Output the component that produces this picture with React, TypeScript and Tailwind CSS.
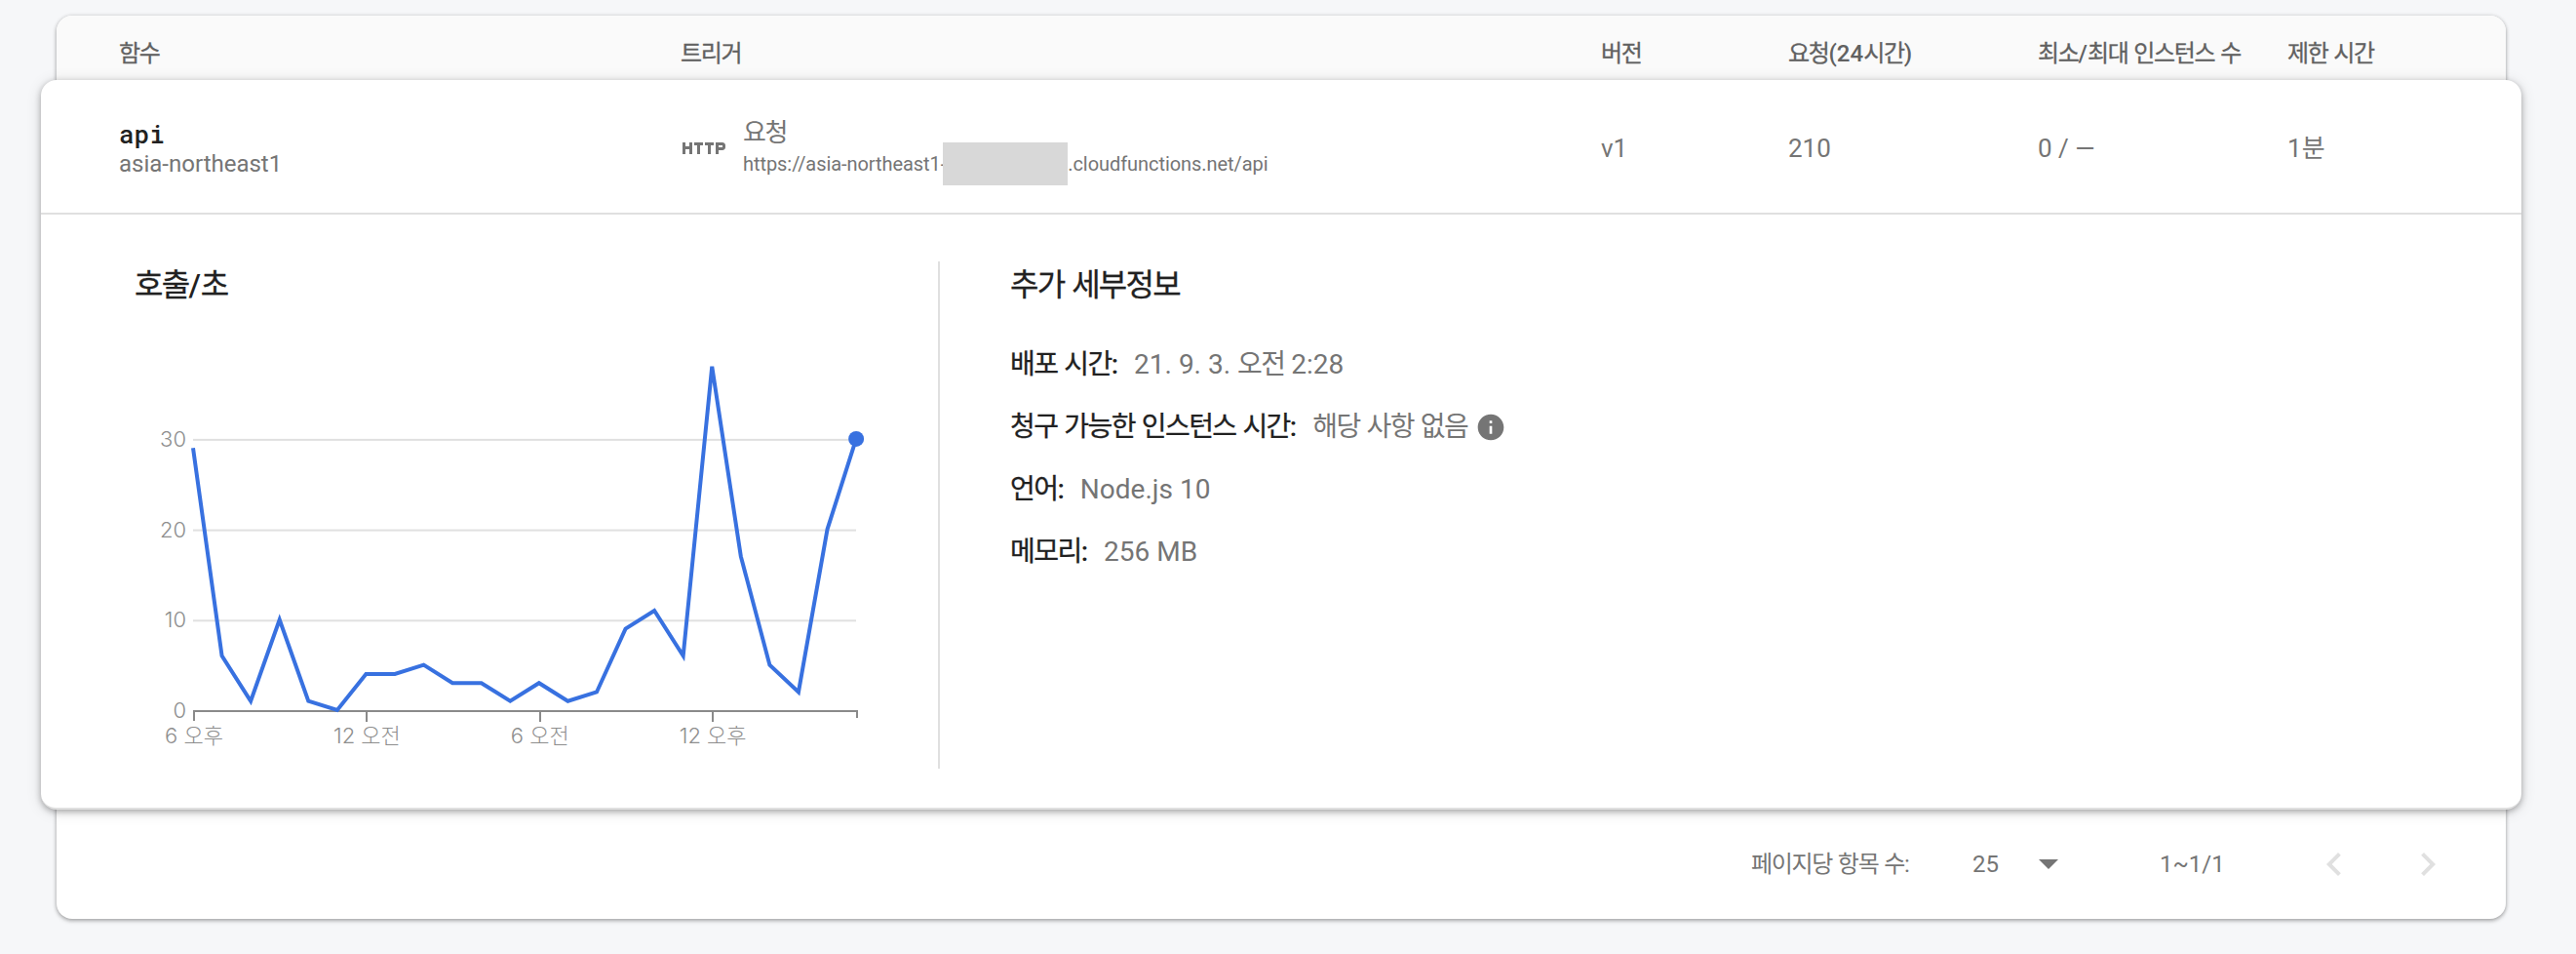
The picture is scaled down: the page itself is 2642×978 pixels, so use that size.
import React from "react";
import { MdHttp, MdInfo } from "react-icons/md";

const points = [29, 6, 1, 10, 1, 0, 4, 4, 5, 3, 3, 1, 3, 1, 2, 9, 11, 6, 38, 17, 5, 2, 20, 30];
const px = (i: number) => 198 + i * 29.57;
const py = (v: number) => 728 - v * 9.27;

const grid = "grid grid-cols-[576px_944px_192px_256px_256px_1fr]";
const kr = "font-[Roboto,'Noto_Sans_CJK_KR',sans-serif]";

// Sets Hangul runs slightly tighter than the Latin text around them.
function Ko({ children, strong }: { children: string; strong?: boolean }) {
  return (
    <span>
      {children.split(/([가-힣][가-힣 ]*)/).map((part, i) =>
        i % 2 ? (
          <span
            key={i}
            className={
              strong
                ? "font-normal tracking-[-0.055em] [word-spacing:0.05em] [-webkit-text-stroke:0.3px]"
                : "tracking-[-0.055em] [word-spacing:0.05em]"
            }
          >
            {part}
          </span>
        ) : (
          part
        ),
      )}
    </span>
  );
}

function Detail({ label, value, children }: { label: string; value: string; children?: React.ReactNode }) {
  return (
    <div className="flex h-16 items-center text-[28px] leading-10">
      <span className="font-medium text-[#212121]"><Ko strong>{label}</Ko></span>
      <span className="ml-4 text-[#757575]"><Ko>{value}</Ko></span>
      {children}
    </div>
  );
}

function Chart() {
  return (
    <svg width="800" height="430" viewBox="130 350 800 430" className="block font-[Inter,'Noto_Sans_CJK_KR',sans-serif] font-light">
      {[30, 20, 10].map((v) => (
        <rect key={v} x="198" y={729 - v * 9.27 - 1} width="680" height="2" fill="#e0e0e0" />
      ))}
      {[30, 20, 10, 0].map((v) => (
        <text key={v} x="191" y={736 - v * 9.27} textAnchor="end" fontSize="22" fill="#8e8e8e">{v}</text>
      ))}
      <path d="M199 739V729H879V736M376 729V740M554 729V740M731 729V740" fill="none" stroke="#8a8a8a" strokeWidth="2" />
      {["6 오후", "12 오전", "6 오전", "12 오후"].map((t, i) => (
        <text key={i} x={199 + i * 177.4} y="762" textAnchor="middle" fontSize="22" fill="#8e8e8e">{t}</text>
      ))}
      <polyline points={points.map((v, i) => `${px(i)},${py(v)}`).join(" ")} fill="none" stroke="#3871e0" strokeWidth="4" />
      <circle cx={px(23)} cy={py(30)} r="8" fill="#3871e0" />
    </svg>
  );
}

const columns = ["함수", "트리거", "버전", "요청(24시간)", "최소/최대 인스턴스 수", "제한 시간"];

export default function App() {
  return (
    <div className={`h-[978px] w-[2642px] bg-[#f6f7f9] pt-4 pr-14 pl-[42px] text-[#757575] ${kr}`}>
      <div className="mx-4 h-[926px] rounded-2xl bg-white shadow-[0_2px_4px_rgba(0,0,0,0.3),0_0_4px_rgba(0,0,0,0.12)]">
        <div className={`${grid} h-[66px] items-center rounded-t-2xl bg-[#fafafa] pt-3 pl-16 text-[24px] font-medium text-[#616161]`}>
          {columns.map((c) => <Ko key={c} strong>{c}</Ko>)}
        </div>
        <div className="-mx-4 h-[748px] rounded-2xl border-b-2 border-[#e0e0e0] bg-white shadow-[0_2px_6px_rgba(0,0,0,0.3),0_2px_16px_rgba(0,0,0,0.12)]">
          <div className={`${grid} h-[138px] items-center border-b-2 border-[#e0e0e0] pt-1 pl-20 text-[26px]`}>
            <div className="pt-0.5 leading-[32px]">
              <div className="font-['Roboto_Mono','DejaVu_Sans_Mono',monospace] text-[26px] leading-[30px] font-medium text-[#212121]">api</div>
              <div className="text-[24px]">asia-northeast1</div>
            </div>
            <div className="flex items-center">
              <MdHttp className="mr-4 size-12" />
              <div>
                <div className="pt-px text-[26px] leading-[31px]"><Ko>요청</Ko></div>
                <div className="flex h-8 items-center text-[20px] tracking-[-0.003em]">
                  <span>https://asia-northeast1-</span>
                  <span className="relative -ml-[3px] h-11 w-32 shrink-0 bg-[#d8d8d8]" />
                  <span>.cloudfunctions.net/api</span>
                </div>
              </div>
            </div>
            <span>v1</span><span>210</span><span>0 / —</span><Ko>1분</Ko>
          </div>
          <div className="flex pt-12">
            <div className="h-[520px] w-[922px] border-r-2 border-[#e0e0e0] pl-24">
              <h2 className="h-[82px] text-[32px] leading-[48px] font-medium text-[#212121]"><Ko strong>호출/초</Ko></h2>
              <div className="-ml-2"><Chart /></div>
            </div>
            <div className="pl-[72px]">
              <h2 className="h-[74px] text-[32px] leading-[48px] font-medium text-[#212121]"><Ko strong>추가 세부정보</Ko></h2>
              <Detail label="배포 시간:" value="21. 9. 3. 오전 2:28" />
              <Detail label="청구 가능한 인스턴스 시간:" value="해당 사항 없음">
                <MdInfo className="ml-2 size-8" />
              </Detail>
              <Detail label="언어:" value="Node.js 10" />
              <Detail label="메모리:" value="256 MB" />
            </div>
          </div>
        </div>
        <div className="flex h-28 items-center justify-end text-[24px]">
          <span className="w-[227px]"><Ko>페이지당 항목 수:</Ko></span>
          <span className="w-[68px]">25</span>
          <svg width="20" height="10" viewBox="0 0 20 10" fill="#757575"><path d="M0 0h20L10 10z" /></svg>
          <span className="ml-[104px] w-[155px]">1~1/1</span>
          <svg className="size-12" viewBox="0 0 24 24" fill="#e0e0e0"><path d="M15.41 7.41L14 6l-6 6 6 6 1.41-1.41L10.83 12z" /></svg>
          <svg className="mr-14 ml-12 size-12" viewBox="0 0 24 24" fill="#e0e0e0"><path d="M10 6L8.59 7.41 13.17 12l-4.58 4.59L10 18l6-6z" /></svg>
        </div>
      </div>
    </div>
  );
}
